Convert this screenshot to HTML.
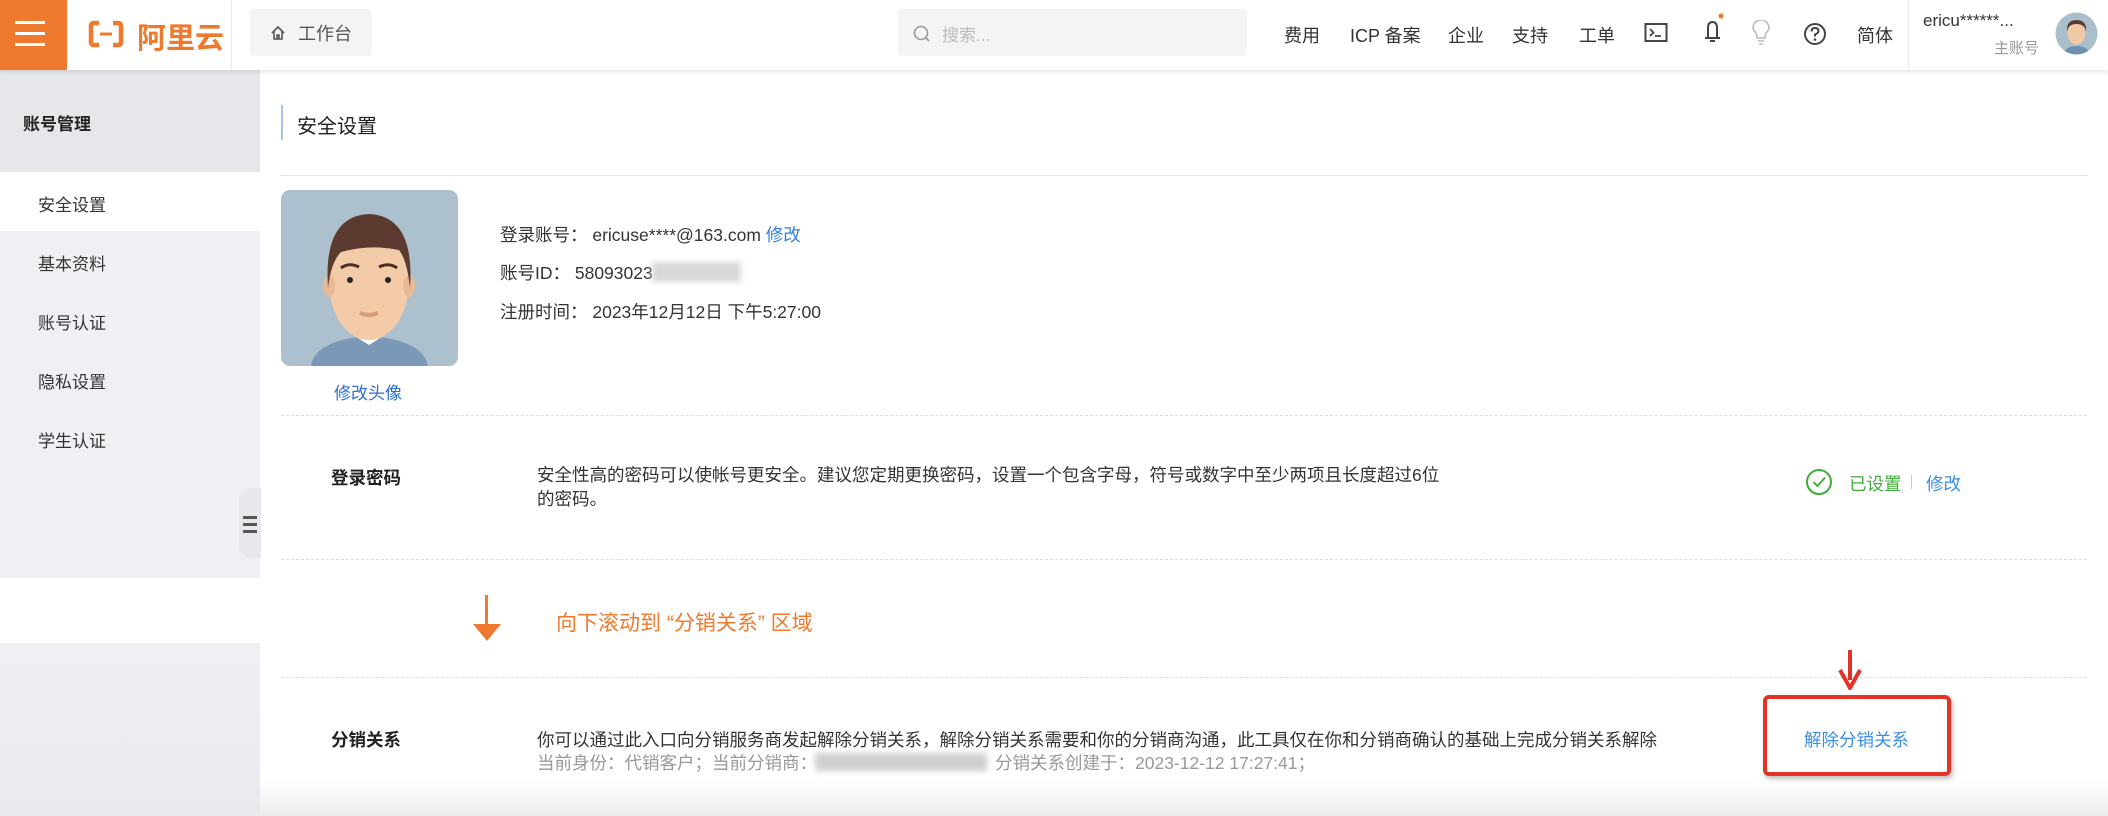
<!DOCTYPE html>
<html><head><meta charset="utf-8"><style>
*{margin:0;padding:0;box-sizing:border-box}
body{width:2108px;height:816px;overflow:hidden;background:#fff;font-family:"Liberation Sans","Noto Sans CJK SC",sans-serif;color:#333;position:relative}
.a{position:absolute;white-space:nowrap}
.hdr{position:absolute;left:0;top:0;width:2108px;height:70px;background:#fff;box-shadow:0 2px 4px rgba(0,0,0,.1);z-index:5}
.nav{font-size:18px;color:#333;top:22px}
.side{position:absolute;left:0;width:260px;background:#eef0f4}
.si{font-size:17px;color:#333;left:38px}
.dash{position:absolute;left:281px;width:1806px;border-top:1px dashed #dcdfe6}
.d{font-size:17.5px;color:#333}
</style></head><body>
<div class="hdr">
 <div class="a" style="left:0;top:0;width:67px;height:70px;background:#ef7a2e">
  <div class="a" style="left:15px;top:21px;width:30px;height:3px;background:#fff"></div>
  <div class="a" style="left:15px;top:32px;width:30px;height:3px;background:#fff"></div>
  <div class="a" style="left:15px;top:43px;width:30px;height:3px;background:#fff"></div>
 </div>
 <svg class="a" style="left:88px;top:20px" width="36" height="28" viewBox="0 0 36 28"><path d="M11 3H6Q3 3 3 6V22Q3 25 6 25H11M25 3H30Q33 3 33 6V22Q33 25 30 25H25" fill="none" stroke="#ef7a2e" stroke-width="4.5"/><rect x="12" y="12.5" width="12" height="3" fill="#ef7a2e"/></svg>
 <div class="a" style="left:137px;top:15px;font-size:29px;color:#ef7a2e;font-weight:bold">阿里云</div>
 <div class="a" style="left:231px;top:0;width:1px;height:70px;background:#e8e8e8"></div>
 <div class="a" style="left:250px;top:9px;width:122px;height:47px;background:#f3f4f6;border-radius:3px"></div>
 <svg class="a" style="left:270px;top:25px" width="16" height="16" viewBox="0 0 16 16"><path d="M2 8L8 2L14 8M4 6V14H12V6M7 14V10H9V14" fill="none" stroke="#555" stroke-width="1.6"/></svg>
 <div class="a" style="left:298px;top:20px;font-size:18px;color:#555">工作台</div>
 <div class="a" style="left:898px;top:9px;width:349px;height:47px;background:#f3f4f6;border-radius:3px"></div>
 <svg class="a" style="left:912px;top:24px" width="20" height="20" viewBox="0 0 20 20"><circle cx="9" cy="9" r="6.5" fill="none" stroke="#999" stroke-width="1.6"/><path d="M14 14L17 17" stroke="#999" stroke-width="1.6"/></svg>
 <div class="a" style="left:942px;top:21px;font-size:17px;color:#bbb">搜索...</div>
 <div class="a nav" style="left:1284px">费用</div>
 <div class="a nav" style="left:1350px">ICP 备案</div>
 <div class="a nav" style="left:1448px">企业</div>
 <div class="a nav" style="left:1512px">支持</div>
 <div class="a nav" style="left:1579px">工单</div>
 <svg class="a" style="left:1644px;top:22px" width="24" height="22" viewBox="0 0 24 22"><rect x="1.5" y="2" width="21" height="17" fill="none" stroke="#444" stroke-width="2"/><path d="M6 7L9.5 10.5L6 14M11 14H17" fill="none" stroke="#444" stroke-width="1.8"/></svg>
 <svg class="a" style="left:1700px;top:13px" width="26" height="32" viewBox="0 0 26 32"><path d="M8 25V15Q8 9 12.5 9Q17 9 17 15V25M5 25H20M10 28H15" fill="none" stroke="#444" stroke-width="2"/><circle cx="21" cy="3" r="2.5" fill="#ef7a2e"/></svg>
 <svg class="a" style="left:1750px;top:20px" width="22" height="26" viewBox="0 0 22 26"><path d="M7 18Q7 14 4.5 11Q3 9 3 8A8 8 0 0 1 19 8Q19 9 17.5 11Q15 14 15 18ZM8 21H14M9 24H13" fill="none" stroke="#bbb" stroke-width="1.6"/></svg>
 <svg class="a" style="left:1803px;top:22px" width="24" height="24" viewBox="0 0 24 24"><circle cx="12" cy="12" r="10" fill="none" stroke="#444" stroke-width="2"/><path d="M8.5 9.5Q8.5 6 12 6Q15.5 6 15.5 9Q15.5 11 12 12.5V14.5" fill="none" stroke="#444" stroke-width="2"/><circle cx="12" cy="17.5" r="1.3" fill="#444"/></svg>
 <div class="a nav" style="left:1857px">简体</div>
 <div class="a" style="left:1908px;top:0;width:1px;height:70px;background:#e8e8e8"></div>
 <div class="a" style="left:1923px;top:11px;font-size:17px;color:#333">ericu******...</div>
 <div class="a" style="left:1994px;top:37px;font-size:15px;color:#999">主账号</div>
 <svg class="a" style="left:2055px;top:12px" width="43" height="43" viewBox="0 0 43 43"><defs><clipPath id="c1"><circle cx="21.5" cy="21.5" r="21"/></clipPath></defs><g clip-path="url(#c1)"><rect width="43" height="43" fill="#a9bfcc"/><path d="M8 43Q10 34 21.5 34Q33 34 35 43Z" fill="#6f8fb0"/><ellipse cx="21.5" cy="21" rx="9" ry="11.5" fill="#f2c9a6"/><path d="M12 20Q11 8 21.5 8Q32 8 31 20Q30 12 21.5 12Q13 12 12 20Z" fill="#5a3a30"/></g></svg>
</div>

<div class="side" style="top:70px;height:508px"></div>
<div class="a" style="left:0;top:70px;width:260px;height:102px;background:#e5e7ea"></div>
<div class="a" style="left:23px;top:110px;font-size:17px;font-weight:bold;color:#222">账号管理</div>
<div class="a" style="left:0;top:172px;width:260px;height:59px;background:#fff"></div>
<div class="a si" style="top:191px">安全设置</div>
<div class="a si" style="top:250px">基本资料</div>
<div class="a si" style="top:309px">账号认证</div>
<div class="a si" style="top:368px">隐私设置</div>
<div class="a si" style="top:427px">学生认证</div>
<div class="side" style="top:643px;height:173px;background:linear-gradient(#eef0f4,#e9eaee)"></div>
<div class="a" style="left:239px;top:488px;width:22px;height:70px;background:#e6e8ec;clip-path:polygon(40% 0,100% 0,100% 100%,40% 100%,0 88%,0 12%)"></div>
<div class="a" style="left:243px;top:516px;width:14px;height:3px;background:#555"></div>
<div class="a" style="left:243px;top:523px;width:14px;height:3px;background:#555"></div>
<div class="a" style="left:243px;top:530px;width:14px;height:3px;background:#555"></div>

<div class="a" style="left:281px;top:105px;width:2px;height:35px;background:#a9c2e6"></div>
<div class="a" style="left:297px;top:110px;font-size:20px;color:#222">安全设置</div>
<div class="a" style="left:281px;top:175px;width:1806px;height:1px;background:#e3e3e3"></div>

<svg class="a" style="left:281px;top:190px" width="177" height="176" viewBox="0 0 177 176"><defs><clipPath id="c2"><rect width="177" height="176" rx="9"/></clipPath></defs><g clip-path="url(#c2)"><rect width="177" height="176" fill="#acc0cd"/><path d="M30 176Q34 150 88 146Q142 150 147 176Z" fill="#7b99b7"/><path d="M72 145L88 155L104 145V136H72Z" fill="#fff"/><rect x="74" y="120" width="28" height="24" fill="#e8b995"/><ellipse cx="88" cy="92" rx="40" ry="58" fill="#f4cba8"/><ellipse cx="48" cy="96" rx="6" ry="11" fill="#e8b995"/><ellipse cx="128" cy="96" rx="6" ry="11" fill="#e8b995"/><path d="M47 98Q42 26 88 24Q134 26 129 98Q126 70 118 60Q90 54 60 62Q50 72 47 98Z" fill="#5b3a30"/><circle cx="69" cy="90" r="3" fill="#222"/><circle cx="107" cy="90" r="3" fill="#222"/><path d="M60 78Q68 72 78 77M98 77Q108 72 116 78" stroke="#4a2e24" stroke-width="3" fill="none"/><path d="M79 123Q88 127 97 123" stroke="#d99a7a" stroke-width="4" fill="none"/></g></svg>
<div class="a" style="left:334px;top:379px;font-size:17px;color:#2f6fd1">修改头像</div>

<div class="a d" style="left:500px;top:222px">登录账号：&nbsp;ericuse****@163.com <span style="color:#2f7fe0">修改</span></div>
<div class="a d" style="left:500px;top:260px">账号ID：&nbsp;58093023</div>
<div class="a" style="left:652px;top:262px;width:89px;height:20px;background:#d8d8d8;filter:blur(3px)"></div>
<div class="a d" style="left:500px;top:299px">注册时间：&nbsp;2023年12月12日 下午5:27:00</div>

<div class="dash" style="top:415px"></div>
<div class="a" style="left:331px;top:465px;font-size:17.5px;font-weight:bold;color:#222">登录密码</div>
<div class="a" style="left:537px;top:463px;font-size:17.5px;line-height:24px;color:#333">安全性高的密码可以使帐号更安全。建议您定期更换密码，设置一个包含字母，符号或数字中至少两项且长度超过6位<br>的密码。</div>
<svg class="a" style="left:1805px;top:468px" width="28" height="28" viewBox="0 0 28 28"><circle cx="14" cy="14" r="12" fill="none" stroke="#3fae3a" stroke-width="2"/><path d="M8.5 14L12.5 18L20 9.5" fill="none" stroke="#3fae3a" stroke-width="2"/></svg>
<div class="a" style="left:1849px;top:471px;font-size:17.5px;color:#3fae3a">已设置</div>
<div class="a" style="left:1911px;top:475px;width:1px;height:14px;background:#ccc"></div>
<div class="a" style="left:1926px;top:471px;font-size:17.5px;color:#3a8ee6">修改</div>

<div class="dash" style="top:559px"></div>
<div class="a" style="left:0;top:578px;width:260px;height:65px;background:#fff"></div>
<div class="a" style="left:485px;top:595px;width:3px;height:32px;background:#ef7a2e"></div>
<svg class="a" style="left:472px;top:624px" width="30" height="18" viewBox="0 0 30 18"><path d="M1 0H29L15 17Z" fill="#ef7a2e"/></svg>
<div class="a" style="left:556px;top:607px;font-size:21px;color:#ef7a2e">向下滚动到 “分销关系” 区域</div>
<div class="dash" style="top:677px"></div>

<div class="a" style="left:331px;top:727px;font-size:17.5px;font-weight:bold;color:#222">分销关系</div>
<div class="a" style="left:537px;top:727px;font-size:17.5px;color:#333">你可以通过此入口向分销服务商发起解除分销关系，解除分销关系需要和你的分销商沟通，此工具仅在你和分销商确认的基础上完成分销关系解除</div>
<div class="a" style="left:537px;top:750px;font-size:17.5px;color:#999">当前身份：代销客户；当前分销商：<span style="display:inline-block;width:178px"></span>分销关系创建于：2023-12-12 17:27:41；</div>
<div class="a" style="left:815px;top:753px;width:172px;height:18px;background:#d0d0d0;filter:blur(3px)"></div>

<div class="a" style="left:1848px;top:650px;width:4px;height:30px;background:#e53226"></div>
<svg class="a" style="left:1838px;top:668px" width="24" height="22" viewBox="0 0 24 22"><path d="M2 2L12 20L22 2" fill="none" stroke="#e53226" stroke-width="4" stroke-linejoin="round"/></svg>
<div class="a" style="left:1763px;top:695px;width:188px;height:81px;border:4px solid #e53226;border-radius:6px;box-shadow:2px 3px 5px rgba(0,0,0,.25)"></div>
<div class="a" style="left:1804px;top:727px;font-size:17.5px;color:#3a8ee6">解除分销关系</div>

<div class="a" style="left:260px;top:780px;width:1848px;height:36px;background:linear-gradient(rgba(240,240,242,0),#ececef)"></div>
</body></html>
